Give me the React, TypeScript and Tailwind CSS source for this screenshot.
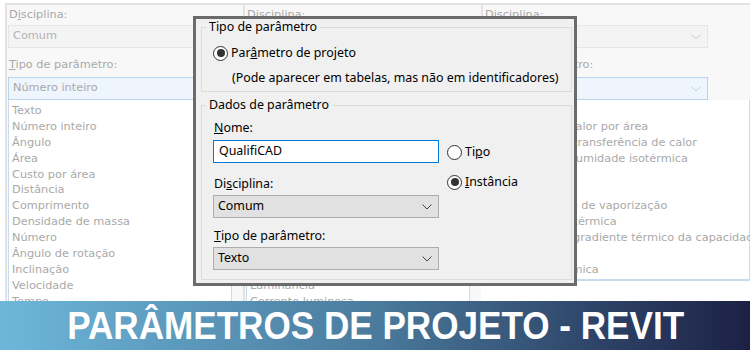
import React from 'react';

const faded = "font-['DejaVu_Sans',sans-serif] text-[11.3px] text-[#a9a9a9]";
const ui = "font-['Noto_Sans',sans-serif] text-[12.4px] text-black";

const panel1 = [
  'Texto',
  'Número inteiro',
  'Ângulo',
  'Área',
  'Custo por área',
  'Distância',
  'Comprimento',
  'Densidade de massa',
  'Número',
  'Ângulo de rotação',
  'Inclinação',
  'Velocidade',
  'Tempo',
];

const panel2 = [
  'Corrente',
  'Potencial elétrico',
  'Frequência',
  'Iluminância',
  'Intensidade luminosa',
  'Fluxo luminoso',
  'Potência',
  'Potência aparente',
  'Densidade de potência',
  'Resistividade elétrica',
  'Temperatura de cor',
  'Luminância',
  'Corrente luminosa',
];

const panel3 = [
  'Densidade',
  'Densidade de calor por área',
  'Coeficiente de transferência de calor',
  'Capacidade de umidade isotérmica',
  'Temperatura',
  'Pressão',
  'Calor específico de vaporização',
  'Condutividade térmica',
  'Coeficiente de gradiente térmico da capacidade de umidade',
  'Vazão',
  'Resistência térmica',
];

function Chevron({ color }: { color: string }) {
  return (
    <svg width="10" height="6" viewBox="0 0 10 6" className="shrink-0">
      <polyline points="0.5,0.5 5,5 9.5,0.5" fill="none" stroke={color} strokeWidth="1" />
    </svg>
  );
}

// faded background copy of the Revit parameter panel
function BgPanel({ items, value, wide, closed }: { items: string[]; value: string; wide?: boolean; closed?: boolean }) {
  return (
    <div className={wide ? 'flex-1 min-w-0 pt-[3px]' : 'w-[238px] shrink-0 pt-[3px]'}>
      <div className={`border-t-2 border-l-2 border-[#e2e2e2] bg-[#f8f8f8] pl-[1px] pt-[2px] ${faded}`}>
        <div className="h-[16px] leading-[16px] pl-[1px]">
          D<span className="underline">i</span>sciplina:
        </div>
        <div className="mt-[2px] w-[224px] h-[23px] border border-[#e6e6e6] bg-[#f4f4f4] flex items-center justify-between pl-[4px] pr-[6px] text-[#b3b3b3]">
          Comum
          <Chevron color="#c8c8c8" />
        </div>
        <div className="mt-[9px] h-[16px] leading-[16px] pl-[1px]">
          <span className="underline">T</span>ipo de parâmetro:
        </div>
        <div className="mt-[4px] w-[224px] h-[23px] border border-[#b9d4ee] bg-[#eef5fc] flex items-center justify-between pl-[4px] pr-[6px]">
          {value}
          <Chevron color="#c3cfdb" />
        </div>
        <div
          className={`${wide ? 'w-full' : 'w-[224px]'} bg-white border-l border-r border-[#c7dcf0] pl-[3px] pt-[3px] ${closed ? 'border-b-2 pb-[1px]' : 'h-[220px]'}`}
        >
          {items.map((t) => (
            <div key={t} className="h-[15.9px] leading-[15.9px] whitespace-nowrap">
              {t}
            </div>
          ))}
        </div>
      </div>
    </div>
  );
}

function Radio({ checked }: { checked?: boolean }) {
  return (
    <span className="w-[15px] h-[15px] rounded-full border border-[#333] bg-white flex items-center justify-center shrink-0">
      {checked && <span className="w-[8px] h-[8px] rounded-full bg-[#333]" />}
    </span>
  );
}

function Combo({ value }: { value: string }) {
  return (
    <div className="h-[23px] w-[226px] border border-[#adadad] bg-[#e1e1e1] flex items-center justify-between pl-[4px] pr-[6px]">
      {value}
      <Chevron color="#444" />
    </div>
  );
}

function Dialog() {
  return (
    <div className={`absolute left-[193px] top-[16px] w-[384px] h-[270px] border-[3px] border-[#6b6b6b] bg-[#f0f0f0] pl-[5px] pr-[2px] ${ui}`}>
      <fieldset className="border border-[#dcdcdc] pl-[11px] pt-[10px] pb-[5px]">
        <legend className="ml-[-7px] px-[3px] leading-[16px]">Tipo de parâmetro</legend>
        <div className="flex items-center gap-[3px] h-[16px]">
          <Radio checked />
          <span>
            Par<span className="underline">â</span>metro de projeto
          </span>
        </div>
        <div className="mt-[9px] h-[16px] leading-[16px] pl-[19px]">
          (Pode aparecer em tabelas, mas não em identificadores)
        </div>
      </fieldset>

      <fieldset className="mt-[5px] border border-[#dcdcdc] pl-[11px] pt-[7px] pb-[9px]">
        <legend className="ml-[-7px] px-[3px] leading-[16px]">Dados de parâmetro</legend>
        <div className="flex gap-[8px]">
          <div className="w-[226px] flex flex-col">
            <div className="h-[16px] leading-[16px] pl-[1px]">
              <span className="underline">N</span>ome:
            </div>
            <div className="mt-[4px] h-[23px] border border-[#0078d7] bg-white flex items-center pl-[5px]">
              QualifiCAD
            </div>
            <div className="mt-[13px] h-[16px] leading-[16px] pl-[1px]">
              Di<span className="underline">s</span>ciplina:
            </div>
            <div className="mt-[3px]">
              <Combo value="Comum" />
            </div>
            <div className="mt-[10px] h-[16px] leading-[16px] pl-[1px]">
              <span className="underline">T</span>ipo de parâmetro:
            </div>
            <div className="mt-[3px]">
              <Combo value="Texto" />
            </div>
          </div>
          <div className="flex flex-col pt-[24px] gap-[14px]">
            <div className="flex items-center gap-[3px] h-[16px]">
              <Radio />
              <span>
                Ti<span className="underline">p</span>o
              </span>
            </div>
            <div className="flex items-center gap-[3px] h-[16px]">
              <Radio checked />
              <span>
                <span className="underline">I</span>nstância
              </span>
            </div>
          </div>
        </div>
      </fieldset>
    </div>
  );
}

export default function App() {
  return (
    <div className="w-[750px] h-[350px] overflow-hidden bg-white flex flex-col relative">
      <div className="h-[301px] overflow-hidden flex pl-[5px]">
        <BgPanel items={panel1} value="Número inteiro" />
        <BgPanel items={panel2} value="Número inteiro" />
        <BgPanel items={panel3} value="Número inteiro" wide closed />
      </div>
      <div className="h-[49px] bg-gradient-to-r from-[#6db7db] via-[#4a7b9d] to-[#1b2145] flex items-center justify-center">
        <span className="font-['Liberation_Sans',sans-serif] font-bold text-white text-[39px] leading-none scale-x-[0.9] whitespace-nowrap pl-[2px]">
          PARÂMETROS DE PROJETO - REVIT
        </span>
      </div>
      <Dialog />
    </div>
  );
}
